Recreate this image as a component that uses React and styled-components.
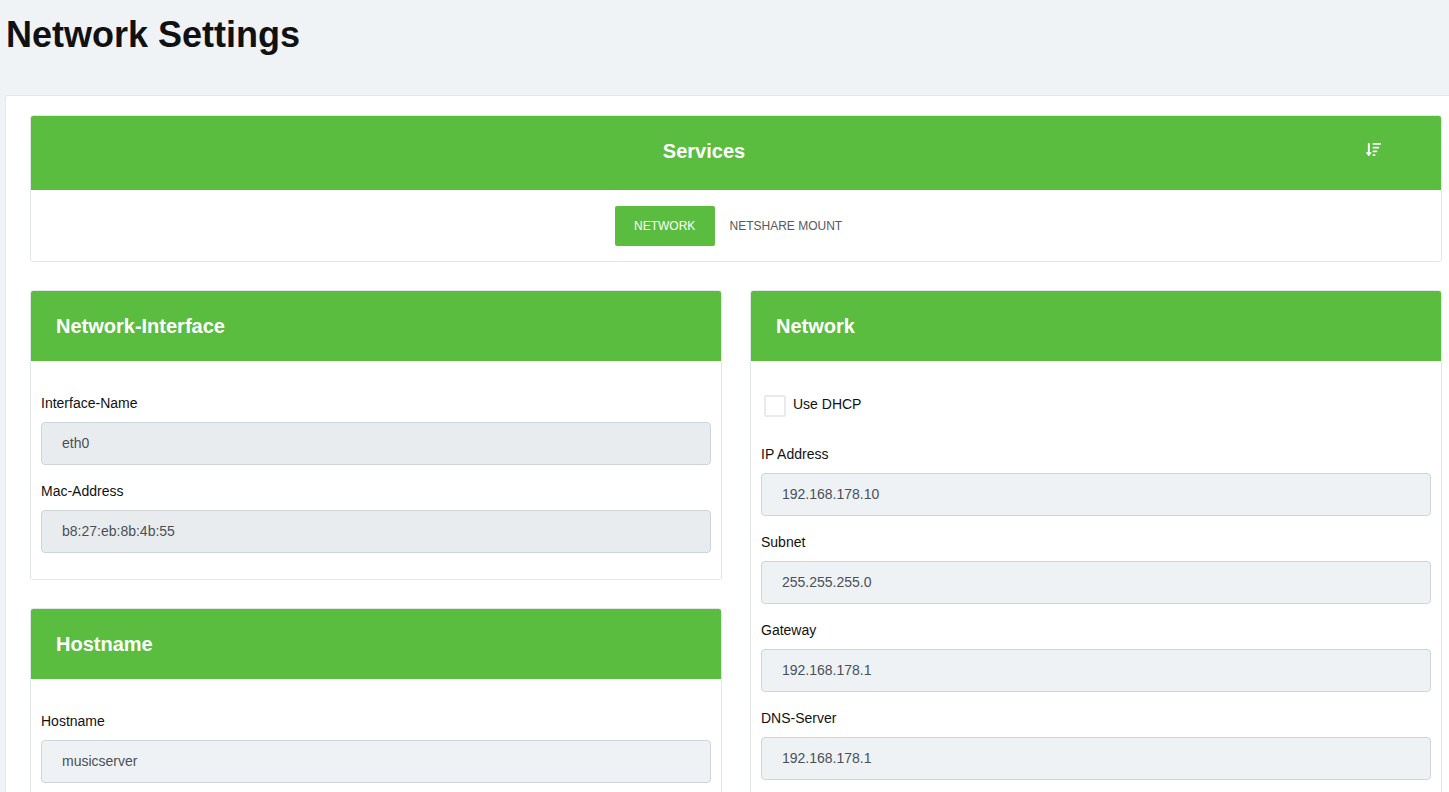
import React from "react"
import styled, { createGlobalStyle } from "styled-components"
import { FaSortAmountDown } from "react-icons/fa"

const GlobalStyle = createGlobalStyle`
  html, body {
    margin: 0;
    height: 792px;
    overflow: hidden;
    background: #eff3f6;
    font-family: "Liberation Sans", Arial, sans-serif;
  }
  * { box-sizing: border-box; }
`

const Title = styled.h1`
  margin: 0;
  padding: 13px 0 0 6px;
  height: 95px;
  font-size: 36px;
  line-height: 43px;
  font-weight: 700;
  color: #111;
`

const Panel = styled.main`
  margin: 0 -18px 0 5px;
  padding: 19px 24px 24px;
  background: #fff;
  border: 1px solid #e3e6ea;
  border-radius: 3px;
`

const Card = styled.section`
  background: #fff;
  border: 1px solid #e3e6ea;
  border-radius: 3px;
  & + & { margin-top: 28px; }
`

const ServicesHeader = styled.header`
  display: flex;
  align-items: center;
  height: 74px;
  padding: 0 60px 4px 12px;
  background: #5abd40;
  color: #fff;
  border-radius: 2px 2px 0 0;
`

const ServicesTitle = styled.h2`
  flex: 1;
  margin: 0;
  text-align: center;
  font-size: 20px;
  font-weight: 700;
`

const SortButton = styled.span`
  display: flex;
  align-items: center;
  justify-content: center;
  width: 16px;
  margin-top: -3px;
  font-size: 15px;
`

const Tabs = styled.nav`
  display: flex;
  justify-content: center;
  padding: 16px 0 15px;
`

const Tab = styled.a`
  display: flex;
  align-items: center;
  height: 40px;
  padding: 0 ${(p) => (p.$active ? "19.2px" : "15px")};
  font-size: 12px;
  border-radius: 2px;
  color: ${(p) => (p.$active ? "#fff" : "#55595f")};
  background: ${(p) => (p.$active ? "#5abd40" : "transparent")};
`

const Columns = styled.div`
  display: grid;
  grid-template-columns: 1fr 1fr;
  gap: 28px;
  margin-top: 28px;
`

const Column = styled.div`
  min-width: 0;
`

const CardHeader = styled.header`
  display: flex;
  align-items: center;
  height: 70px;
  padding: 0 25px;
  background: #5abd40;
  border-radius: 2px 2px 0 0;
`

const CardTitle = styled.h3`
  margin: 0;
  font-size: 20px;
  font-weight: 700;
  color: #fff;
`

const CardBody = styled.div`
  padding: ${(p) => (p.$check ? "34px" : "32px")} 10px 10px;
`

const Field = styled.div`
  margin-bottom: 16px;
`

const Label = styled.label`
  display: block;
  margin-bottom: 8px;
  font-size: 14px;
  line-height: 21px;
  color: #111;
`

const Input = styled.input`
  display: block;
  width: 100%;
  height: 43px;
  padding: 0 20px 2px;
  font-family: inherit;
  font-size: 14px;
  color: #495057;
  background: ${(p) => (p.disabled ? "#e9ecef" : "#eff2f5")};
  border: 1px solid #ced4da;
  border-radius: 4px;
  opacity: 1;
  outline: none;
`

const CheckRow = styled.div`
  display: flex;
  align-items: center;
  gap: 7px;
  padding-left: 3px;
  margin-bottom: 27px;
`

const CheckBox = styled.span`
  width: 22px;
  height: 22px;
  border: 2px solid #e8eaec;
  border-radius: 2px;
`

const CheckText = styled.span`
  padding-bottom: 4px;
  font-size: 14px;
  color: #111;
`

const FormField = ({ label, value, disabled }) => (
  <Field>
    <Label>{label}</Label>
    <Input value={value} disabled={disabled} readOnly />
  </Field>
)

const networkFields = [
  ["IP Address", "192.168.178.10"],
  ["Subnet", "255.255.255.0"],
  ["Gateway", "192.168.178.1"],
  ["DNS-Server", "192.168.178.1"],
]

const App = () => {
  return (
    <>
      <GlobalStyle />
      <Title>Network Settings</Title>
      <Panel>
        <Card>
          <ServicesHeader>
            <ServicesTitle>Services</ServicesTitle>
            <SortButton>
              <FaSortAmountDown />
            </SortButton>
          </ServicesHeader>
          <Tabs>
            <Tab $active>NETWORK</Tab>
            <Tab>NETSHARE MOUNT</Tab>
          </Tabs>
        </Card>
        <Columns>
          <Column>
            <Card>
              <CardHeader>
                <CardTitle>Network-Interface</CardTitle>
              </CardHeader>
              <CardBody>
                <FormField label="Interface-Name" value="eth0" disabled />
                <FormField label="Mac-Address" value="b8:27:eb:8b:4b:55" disabled />
              </CardBody>
            </Card>
            <Card>
              <CardHeader>
                <CardTitle>Hostname</CardTitle>
              </CardHeader>
              <CardBody>
                <FormField label="Hostname" value="musicserver" />
              </CardBody>
            </Card>
          </Column>
          <Column>
            <Card>
              <CardHeader>
                <CardTitle>Network</CardTitle>
              </CardHeader>
              <CardBody $check>
                <CheckRow>
                  <CheckBox />
                  <CheckText>Use DHCP</CheckText>
                </CheckRow>
                {networkFields.map(([label, value]) => (
                  <FormField key={label} label={label} value={value} />
                ))}
              </CardBody>
            </Card>
          </Column>
        </Columns>
      </Panel>
    </>
  )
}

export default App
